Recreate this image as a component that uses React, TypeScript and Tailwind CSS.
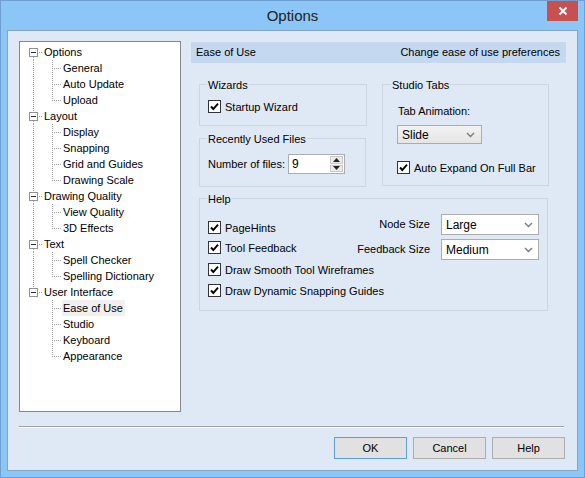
import React from "react";

const tree = [
  { label: "Options", children: ["General", "Auto Update", "Upload"] },
  { label: "Layout", children: ["Display", "Snapping", "Grid and Guides", "Drawing Scale"] },
  { label: "Drawing Quality", children: ["View Quality", "3D Effects"] },
  { label: "Text", children: ["Spell Checker", "Spelling Dictionary"] },
  { label: "User Interface", children: ["Ease of Use", "Studio", "Keyboard", "Appearance"] },
];

const dot = { stroke: "#a0a0a0", strokeWidth: 1, strokeDasharray: "1 1", shapeRendering: "crispEdges" as const };

function RootRow({ label, first, last }: { label: string; first: boolean; last: boolean }) {
  return (
    <div className="flex h-[16px] items-center">
      <svg width="24" height="16" className="shrink-0">
        {!first && <line x1="13.5" y1="0" x2="13.5" y2="4" {...dot} />}
        {!last && <line x1="13.5" y1="13" x2="13.5" y2="16" {...dot} />}
        <rect x="9.5" y="4.5" width="8" height="8" fill="#fff" stroke="#919191" shapeRendering="crispEdges" />
        <line x1="11" y1="8.5" x2="16" y2="8.5" stroke="#2b2b2b" shapeRendering="crispEdges" />
        <line x1="19" y1="8.5" x2="23" y2="8.5" {...dot} />
      </svg>
      <span className="leading-[16px] whitespace-nowrap">{label}</span>
    </div>
  );
}

function ChildRow({ label, lastRoot, lastChild, selected }: { label: string; lastRoot: boolean; lastChild: boolean; selected: boolean }) {
  return (
    <div className="flex h-[16px] items-center">
      <svg width="42" height="16" className="shrink-0">
        {!lastRoot && <line x1="13.5" y1="0" x2="13.5" y2="16" {...dot} />}
        <line x1="32.5" y1="0" x2="32.5" y2={lastChild ? 9 : 16} {...dot} />
        <line x1="34" y1="8.5" x2="42" y2="8.5" {...dot} />
      </svg>
      <span className={`leading-[16px] whitespace-nowrap pl-[1px] pr-[2px] ${selected ? "bg-[#f0f0f0]" : ""}`}>{label}</span>
    </div>
  );
}

function Check({ label }: { label: string }) {
  return (
    <div className="flex h-[13px] items-center gap-[4px]">
      <svg width="13" height="13" className="shrink-0">
        <rect x="0.5" y="0.5" width="12" height="12" fill="#fff" stroke="#333" shapeRendering="crispEdges" />
        <polyline points="3,6.5 5.3,9 10,3.6" fill="none" stroke="#000" strokeWidth="1.9" />
      </svg>
      <span className="leading-[14px] whitespace-nowrap">{label}</span>
    </div>
  );
}

function Chevron() {
  return (
    <svg width="9" height="6" className="shrink-0">
      <polyline points="1,1 4.5,4.5 8,1" fill="none" stroke="#7a7a7a" strokeWidth="1.4" />
    </svg>
  );
}

function Legend({ text, ml }: { text: string; ml: string }) {
  return <div className={`-mt-[7px] ${ml} w-fit px-[1px] leading-[14px] bg-[#dfe8f5]`}>{text}</div>;
}

function Combo({ value }: { value: string }) {
  return (
    <div className="h-[21px] border border-[#acacac] bg-white flex items-center justify-between pl-[4px] pr-[5px]">
      <span className="text-[12px]">{value}</span>
      <Chevron />
    </div>
  );
}

export default function App() {
  return (
    <div className="w-[585px] h-[478px] border border-[#6e9fd0] bg-[#8cc6f7] flex flex-col text-[11px] text-black" style={{ fontFamily: '"Liberation Sans", Arial, sans-serif' }}>
      {/* title bar */}
      <div className="h-[29px] shrink-0 grid grid-cols-[1fr_auto_1fr]">
        <div />
        <div className="pt-[1px] leading-[27px] text-[15px] text-[#222]">Options</div>
        <div className="flex justify-end items-start pr-[6px]">
          <div className="w-[31px] h-[20px] bg-[#c75050] flex items-center justify-center">
            <svg width="10" height="10">
              <path d="M1.5 1.5 L8.5 8.5 M8.5 1.5 L1.5 8.5" stroke="#fff" strokeWidth="2" />
            </svg>
          </div>
        </div>
      </div>

      {/* client */}
      <div className="mx-[6px] h-[441px] border border-[#83a5c9] bg-[#dfe8f5] pl-[11px] pt-[10px] pr-[11px] flex flex-col">
        <div className="flex gap-[10px]">
          <div className="w-[162px] h-[371px] shrink-0 border border-[#828790] bg-white pt-[2px]">
            {tree.map((g, gi) => (
              <div key={g.label}>
                <RootRow label={g.label} first={gi === 0} last={gi === tree.length - 1} />
                {g.children.map((c, ci) => (
                  <ChildRow
                    key={c}
                    label={c}
                    lastRoot={gi === tree.length - 1}
                    lastChild={ci === g.children.length - 1}
                    selected={c === "Ease of Use"}
                  />
                ))}
              </div>
            ))}
          </div>

          <div className="w-[375px] mt-[1px] flex flex-col">
            <div className="h-[21px] bg-[#c4d8ef] flex items-center justify-between pl-[5px] pr-[6px]">
              <span>Ease of Use</span>
              <span>Change ease of use preferences</span>
            </div>

            <div className="mt-[21px] pl-[8px] flex gap-[15px]">
              <div className="flex flex-col gap-[12px]">
                <div className="w-[168px] h-[42px] border border-[#cdd6de]">
                  <Legend text="Wizards" ml="ml-[7px]" />
                  <div className="mt-[8px] ml-[8px]">
                    <Check label="Startup Wizard" />
                  </div>
                </div>
                <div className="w-[167px] h-[49px] border border-[#cdd6de]">
                  <Legend text="Recently Used Files" ml="ml-[7px]" />
                  <div className="mt-[8px] ml-[8px] flex items-center">
                    <span className="w-[80px] whitespace-nowrap">Number of files:</span>
                    <div className="w-[57px] h-[20px] border border-[#abadb3] bg-white flex">
                      <span className="flex-1 pl-[3px] text-[12px] leading-[18px]">9</span>
                      <div className="w-[15px] flex flex-col p-[1px] gap-[1px]">
                        <div className="flex-1 border border-[#c8c8c8] bg-[#ececec] flex items-center justify-center">
                          <svg width="7" height="4"><polygon points="0,4 7,4 3.5,0" fill="#222" /></svg>
                        </div>
                        <div className="flex-1 border border-[#c8c8c8] bg-[#ececec] flex items-center justify-center">
                          <svg width="7" height="4"><polygon points="0,0 7,0 3.5,4" fill="#222" /></svg>
                        </div>
                      </div>
                    </div>
                  </div>
                </div>
              </div>

              <div className="w-[167px] h-[102px] border border-[#cdd6de]">
                <Legend text="Studio Tabs" ml="ml-[8px]" />
                <div className="mt-[12px] ml-[15px] leading-[14px]">Tab Animation:</div>
                <div className="mt-[7px] ml-[14px] w-[85px] h-[19px] border border-[#acacac] bg-gradient-to-b from-[#f2f2f2] to-[#e5e5e5] flex items-center justify-between pl-[4px] pr-[6px]">
                  <span className="text-[12px]">Slide</span>
                  <Chevron />
                </div>
                <div className="mt-[17px] ml-[14px]">
                  <Check label="Auto Expand On Full Bar" />
                </div>
              </div>
            </div>

            <div className="mt-[11px] ml-[8px] w-[349px] h-[113px] border border-[#cdd6de]">
              <Legend text="Help" ml="ml-[7px]" />
              <div className="flex justify-between pr-[8px]">
                <div className="mt-[15px] ml-[8px] flex flex-col gap-[7px]">
                  <Check label="PageHints" />
                  <Check label="Tool Feedback" />
                </div>
                <div className="mt-[8px] grid grid-cols-[auto_98px] gap-x-[11px] gap-y-[4px] items-center">
                  <span className="text-right whitespace-nowrap">Node Size</span>
                  <Combo value="Large" />
                  <span className="text-right whitespace-nowrap">Feedback Size</span>
                  <Combo value="Medium" />
                </div>
              </div>
              <div className="mt-[3px] ml-[8px] flex flex-col gap-[8px]">
                <Check label="Draw Smooth Tool Wireframes" />
                <Check label="Draw Dynamic Snapping Guides" />
              </div>
            </div>
          </div>
        </div>

        <div className="mt-[14px] w-[545px] h-[2px] border-t border-[#a0a0a0] border-b border-b-white" />

        <div className="mt-[9px] flex justify-end gap-[6px] pr-[1px]">
          <div className="w-[73px] h-[22px] border border-[#5b9fe0] bg-[#e1e1e1] flex items-center justify-center">OK</div>
          <div className="w-[73px] h-[22px] border border-[#adadad] bg-[#e1e1e1] flex items-center justify-center">Cancel</div>
          <div className="w-[73px] h-[22px] border border-[#adadad] bg-[#e1e1e1] flex items-center justify-center">Help</div>
        </div>
      </div>
    </div>
  );
}
